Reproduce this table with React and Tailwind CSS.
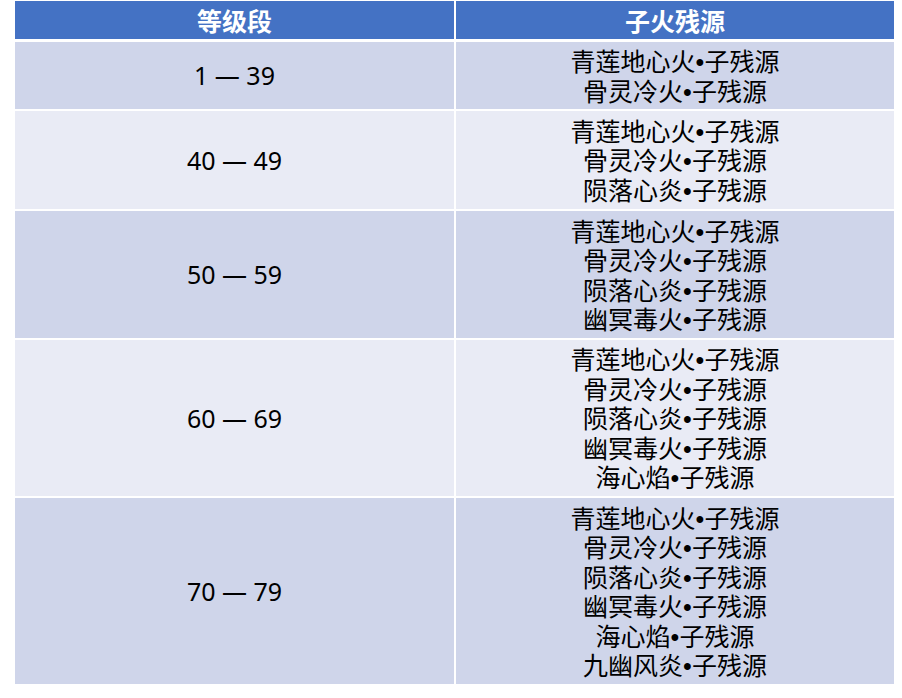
import React from "react";

const rows = [
  { range: "1 — 39", h: "h-[67px]", bg: "bg-[#CFD5EA]", items: ["青莲地心火", "骨灵冷火"] },
  { range: "40 — 49", h: "h-[98px]", bg: "bg-[#E9EBF5]", items: ["青莲地心火", "骨灵冷火", "陨落心炎"] },
  { range: "50 — 59", h: "h-[127px]", bg: "bg-[#CFD5EA]", items: ["青莲地心火", "骨灵冷火", "陨落心炎", "幽冥毒火"] },
  { range: "60 — 69", h: "h-[156px]", bg: "bg-[#E9EBF5]", items: ["青莲地心火", "骨灵冷火", "陨落心炎", "幽冥毒火", "海心焰"] },
  { range: "70 — 79", h: "h-[186px]", bg: "bg-[#CFD5EA]", items: ["青莲地心火", "骨灵冷火", "陨落心炎", "幽冥毒火", "海心焰", "九幽风炎"] },
];

export default function App() {
  return (
    <div
      className="w-[902px] h-[698px] bg-white pt-[1px] pl-[15px] text-black"
      style={{ fontFamily: '"Noto Sans CJK SC", "Noto Sans", sans-serif' }}
    >
      <div className="w-[879px] flex flex-col">
        <div className="flex h-[38px] gap-x-[2px]">
          <div className="w-[439px] bg-[#4472C4] flex items-center justify-center text-white font-bold text-[25px] leading-none">
            等级段
          </div>
          <div className="w-[438px] bg-[#4472C4] flex items-center justify-center text-white font-bold text-[25px] leading-none">
            子火残源
          </div>
        </div>
        <div className="flex flex-col gap-y-[2px] mt-[3px]">
          {rows.map((r, i) => (
            <div key={i} className={`flex gap-x-[2px] ${r.h}`}>
              <div className={`w-[439px] ${r.bg} flex items-center justify-center text-[25px] leading-none font-['Noto_Sans',sans-serif]`}>
                {r.range}
              </div>
              <div className={`w-[438px] ${r.bg} flex flex-col items-center justify-center text-[25px]`}>
                {r.items.map((t, j) => (
                  <div key={j} className="h-[29.5px] leading-[29.5px] whitespace-nowrap">
                    {t}
                    <span className="font-['Liberation_Sans',sans-serif]">•</span>
                    子残源
                  </div>
                ))}
              </div>
            </div>
          ))}
        </div>
      </div>
    </div>
  );
}
